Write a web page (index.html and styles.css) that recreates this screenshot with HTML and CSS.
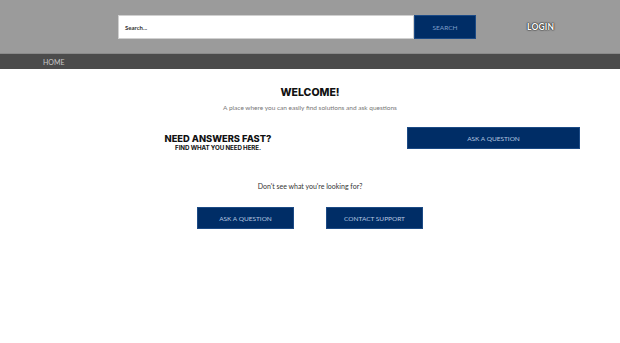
FILE: index.html
```html
<!DOCTYPE html>
<html>
<head>
<meta charset="utf-8">
<link rel="stylesheet" href="styles.css">
</head>
<body>
<header class="top">
  <form class="search">
    <div class="search-input">Search...</div>
    <div class="search-btn">SEARCH</div>
  </form>
  <div class="login">LOGIN</div>
</header>
<nav class="nav"><span class="nav-item">HOME</span></nav>
<main class="main">
  <h1 class="welcome">WELCOME!</h1>
  <p class="sub">A place where you can easily find solutions and ask questions</p>
  <div class="row">
    <div class="fast">
      <div class="fast-title">NEED ANSWERS FAST?</div>
      <div class="fast-sub">FIND WHAT YOU NEED HERE.</div>
    </div>
    <div class="btn btn-wide">ASK A QUESTION</div>
  </div>
  <p class="dont">Don't see what you're looking for?</p>
  <div class="actions">
    <div class="btn btn-small">ASK A QUESTION</div>
    <div class="btn btn-small">CONTACT SUPPORT</div>
  </div>
</main>
</body>
</html>
```
FILE: styles.css
```css
* { box-sizing: border-box; }
body {
  margin: 0;
  font-family: Lato, "Open Sans", sans-serif;
  background: #fff;
  width: 620px;
  height: 343px;
  overflow: hidden;
}
.top {
  height: 54px;
  background: #9b9b9b;
  border-bottom: 1px solid #8a8a8a;
  display: flex;
  align-items: flex-start;
  padding: 15px 0 0 118px;
}
.search {
  display: flex;
  margin: 0;
  width: 358px;
  height: 24px;
}
.search-input {
  flex: 1;
  background: #fff;
  border: 1px solid #d0d0d0;
  font-size: 6px;
  font-weight: 700;
  color: #333;
  display: flex;
  align-items: center;
  padding-left: 6px;
}
.search-btn {
  width: 62px;
  background: #002d66;
  border: 1px solid #1c4a85;
  color: #7f9fca;
  font-size: 6.5px;
  display: flex;
  align-items: center;
  justify-content: center;
}
.login {
  margin-left: 51px;
  margin-top: 7px;
  font-size: 8.5px;
  font-weight: 700;
  color: #fff;
  letter-spacing: 0.2px;
  text-shadow: 0 0 1px #222, 0 0 1px #222, 0 0 2px #333;
}
.nav {
  height: 15px;
  background: #4b4b4b;
  display: flex;
  align-items: center;
  padding-left: 43px;
}
.nav-item {
  font-size: 7px;
  color: #c9c9c9;
}
.main {
  display: flex;
  flex-direction: column;
  align-items: center;
}
.welcome {
  margin: 17px 0 0;
  font-family: Inter, "DejaVu Sans", sans-serif;
  font-weight: 800;
  font-size: 10.5px;
  color: #111;
  line-height: 13px;
}
.sub {
  margin: 4px 0 0;
  font-size: 6.5px;
  color: #777;
  line-height: 9px;
}
.row {
  align-self: stretch;
  display: grid;
  grid-template-columns: 196px 173px;
  column-gap: 91px;
  padding-left: 120px;
  margin-top: 15px;
  align-items: start;
}
.fast {
  text-align: center;
  padding-top: 6px;
}
.fast-title {
  font-family: Inter, "DejaVu Sans", sans-serif;
  font-weight: 800;
  font-size: 9.3px;
  color: #111;
  line-height: 11px;
}
.fast-sub {
  font-family: Inter, "DejaVu Sans", sans-serif;
  font-weight: 700;
  font-size: 6.2px;
  color: #111;
  line-height: 8px;
  letter-spacing: -0.1px;
}
.btn {
  background: #002d66;
  border: 1px solid #1c4a85;
  color: #b7c7e0;
  font-size: 6.5px;
  display: flex;
  align-items: center;
  justify-content: center;
}
.btn-wide {
  height: 22px;
}
.dont {
  margin: 30px 0 0;
  font-size: 7px;
  color: #333;
  line-height: 9px;
}
.actions {
  display: flex;
  gap: 32px;
  margin-top: 16px;
}
.btn-small {
  width: 97px;
  height: 22px;
}
```
